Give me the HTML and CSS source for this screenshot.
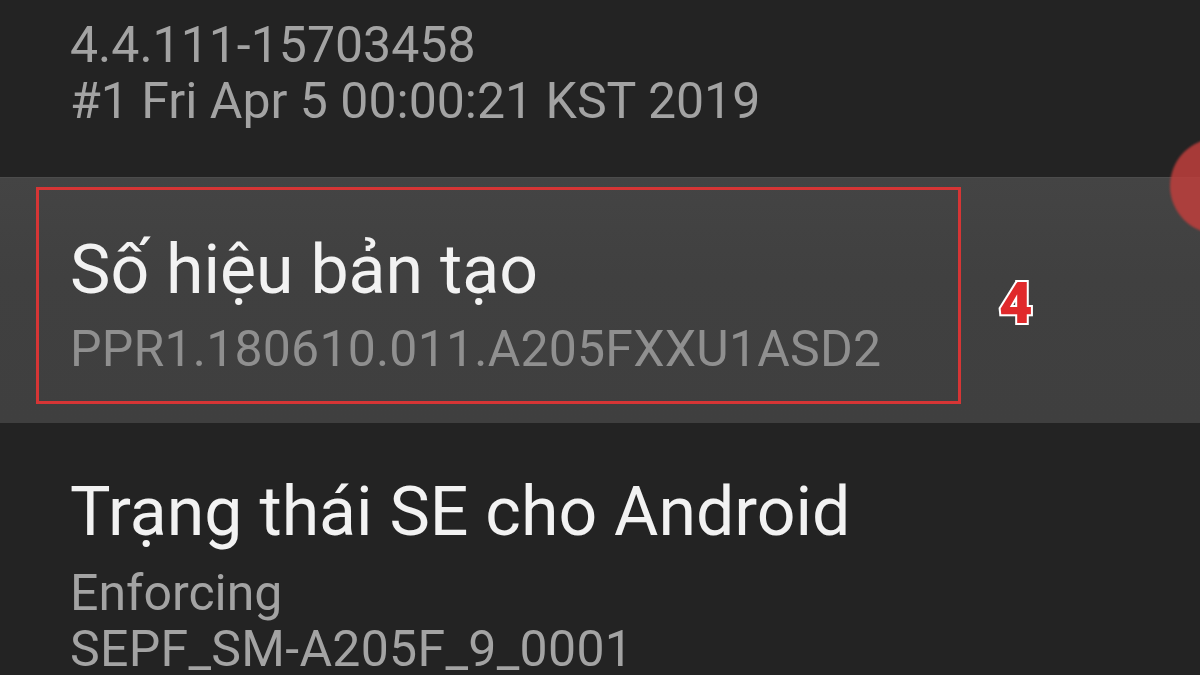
FILE: index.html
```html
<!DOCTYPE html>
<html lang="vi">
<head>
<meta charset="utf-8">
<title>Thông tin phần mềm</title>
<link rel="stylesheet" href="styles.css">
</head>
<body>
<div class="screen">
  <section class="item item-top">
    <div class="sub">4.4.111-15703458</div>
    <div class="sub">#1 Fri Apr 5 00:00:21 KST 2019</div>
  </section>
  <section class="highlight">
    <div class="frame">
      <div class="title">Số hiệu bản tạo</div>
      <div class="sub sub-dim">PPR1.180610.011.A205FXXU1ASD2</div>
    </div>
    <div class="step">4</div>
  </section>
  <section class="item item-bottom">
    <div class="title title-lg">Trạng thái SE cho Android</div>
    <div class="sub sub-first">Enforcing</div>
    <div class="sub sub-last">SEPF_SM-A205F_9_0001</div>
  </section>
  <div class="touch"></div>
</div>
</body>
</html>
```
FILE: styles.css
```css
html, body {
  margin: 0;
  padding: 0;
}
body {
  background: #232323;
  font-family: Roboto, "Noto Sans", "Liberation Sans", sans-serif;
  width: 1200px;
  height: 675px;
  overflow: hidden;
}
.screen {
  position: relative;
  width: 1200px;
  height: 675px;
  overflow: hidden;
  background: #232323;
}
.item {
  padding-left: 70px;
}
.item-top {
  padding-top: 17px;
  height: 177px;
  box-sizing: border-box;
}
.sub {
  font-size: 50px;
  line-height: 56px;
  color: #a3a3a3;
  white-space: nowrap;
}
.sub-dim {
  font-size: 50px;
  line-height: 60px;
  margin-top: 9px;
  letter-spacing: 0.2px;
  color: #8f8f8f;
}
.sub-last {
  letter-spacing: 0.3px;
}
.title {
  font-size: 68px;
  line-height: 80px;
  color: #f2f2f2;
  white-space: nowrap;
}
.title-lg {
  font-size: 68px;
}
.highlight {
  display: flex;
  align-items: flex-start;
  height: 246px;
  box-sizing: border-box;
  background: linear-gradient(#444444, #404040 40%, #3f3f3f);
  border-top: 1px solid #4c4c4c;
  padding: 9px 0 0 36px;
}
.frame {
  width: 925px;
  height: 217px;
  box-sizing: border-box;
  border: 3px solid #d63535;
  padding: 40px 0 0 31px;
}
.step {
  margin: 88px 0 0 38px;
  font-size: 58px;
  font-weight: 900;
  line-height: 56px;
  color: #e0292b;
  -webkit-text-stroke: 4px #ffffff;
  paint-order: stroke fill;
}
.item-bottom {
  padding-top: 49px;
}
.sub-first {
  margin-top: 13px;
}
.touch {
  position: absolute;
  left: 1170px;
  top: 138px;
  width: 96px;
  height: 96px;
  border-radius: 50%;
  background: rgba(190, 62, 60, 0.85);
  filter: blur(1px);
}
```
